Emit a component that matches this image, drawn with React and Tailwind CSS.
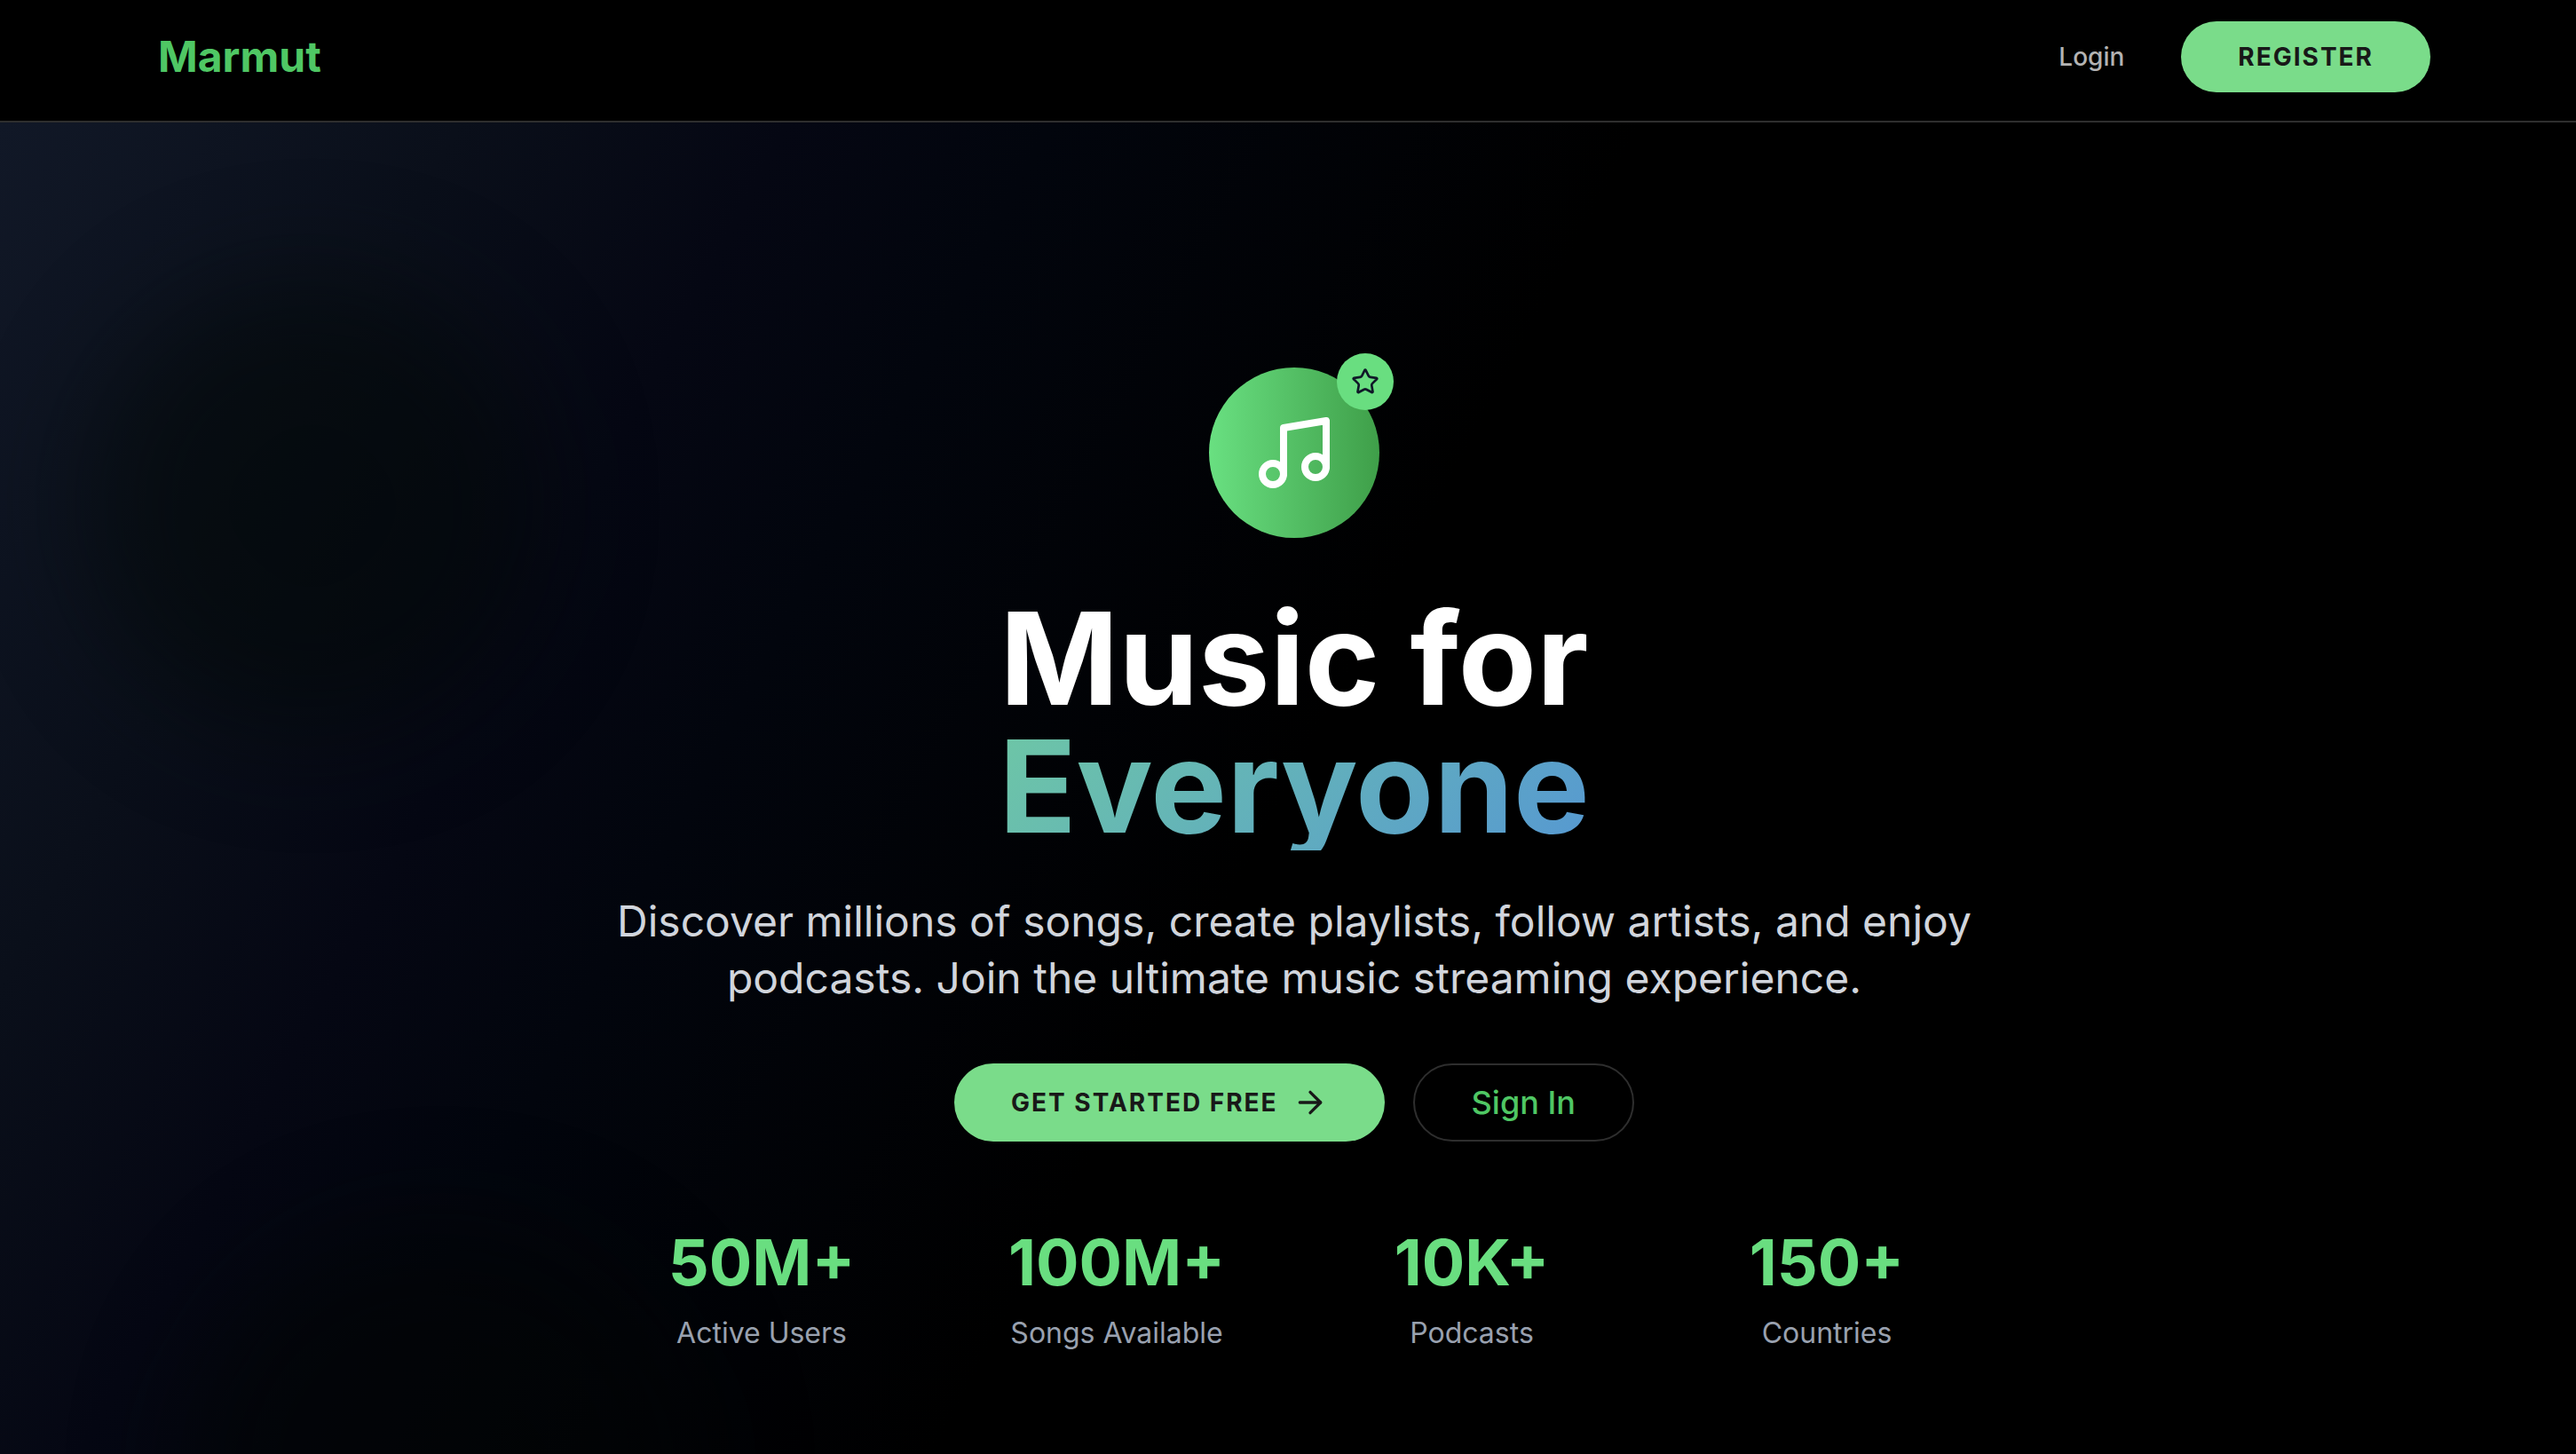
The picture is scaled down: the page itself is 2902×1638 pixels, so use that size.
import { ArrowRight, Music, Star } from "lucide-react";

const stats = [
  { value: "50M+", label: "Active Users" },
  { value: "100M+", label: "Songs Available" },
  { value: "10K+", label: "Podcasts" },
  { value: "150+", label: "Countries" },
];

function Header() {
  return (
    <header className="border-b-2 border-[#2e2e2e] bg-black pt-6 pb-8 pl-[14px]">
      <div className="mx-auto flex max-w-[2560px] items-center justify-between">
        <a href="#home" className="text-5xl leading-[64px] font-bold text-[#4fc764]">
          Marmut
        </a>
        <nav className="flex items-center gap-16">
          <a href="#login" className="text-[28px] leading-10 font-medium text-[#b3b3b3]">
            Login
          </a>
          <button
            type="button"
            className="h-20 rounded-full bg-[#7adc8a] px-16 text-[28px] leading-10 font-bold tracking-[2px] text-[#181818] uppercase"
          >
            Register
          </button>
        </nav>
      </div>
    </header>
  );
}

function HeroBadge() {
  return (
    <div className="relative flex size-48 items-center justify-center rounded-full bg-linear-to-r from-[#69e081] to-[#3f9f49]">
      <Music className="size-24 text-white" />
      <span className="absolute -top-4 -right-4 flex size-16 items-center justify-center rounded-full bg-[#69de80]">
        <Star className="size-8 text-gray-900" />
      </span>
    </div>
  );
}

function Stats() {
  return (
    <dl className="mt-24 grid w-full max-w-[1536px] grid-cols-4 gap-16">
      {stats.map((s) => (
        <div key={s.label} className="flex flex-col-reverse gap-4 text-center">
          <dt className="text-[32px] leading-[48px] text-gray-400">{s.label}</dt>
          <dd className="text-7xl leading-[80px] font-bold text-[#69de80]">{s.value}</dd>
        </div>
      ))}
    </dl>
  );
}

export default function App() {
  return (
    <div className="flex min-h-screen flex-col bg-black font-['Inter',sans-serif]">
      <Header />
      <main className="relative isolate flex grow flex-col items-center overflow-hidden bg-[linear-gradient(118deg,#111827_0%,#0a0f1a_14%,#050713_24%,#02050d_32%,#000000_50%)] pt-[276px] pb-28 pl-[14px]">
        <div className="absolute top-44 left-24 -z-10 size-[512px] rounded-full bg-[#020806] opacity-50 blur-3xl" />
        <div className="absolute -bottom-80 left-52 -z-10 size-[576px] rounded-full bg-[#020404] opacity-60 blur-3xl" />
        <HeroBadge />
        <h1 className="mt-16 w-full max-w-[1792px] text-center text-[144px] leading-none font-bold text-white">
          Music for
          <span className="block bg-[linear-gradient(135deg,#7ee787_0%,#4678f0_100%)] bg-clip-text text-transparent">
            Everyone
          </span>
        </h1>
        <p className="mt-12 max-w-[1536px] text-center text-5xl leading-[64px] text-gray-300">
          Discover millions of songs, create playlists, follow artists, and enjoy podcasts. Join the
          ultimate music streaming experience.
        </p>
        <div className="mt-16 flex items-stretch gap-8">
          <button
            type="button"
            className="flex h-22 items-center gap-4 rounded-full bg-[#7adc8a] px-16 text-[28px] leading-10 font-bold tracking-[2px] text-[#181818] uppercase"
          >
            Get Started Free
            <ArrowRight className="size-10" />
          </button>
          <button
            type="button"
            className="h-22 rounded-full border-2 border-[#2e2e2e] px-16 text-4xl leading-14 font-medium text-[#4fc764]"
          >
            Sign In
          </button>
        </div>
        <Stats />
      </main>
    </div>
  );
}
